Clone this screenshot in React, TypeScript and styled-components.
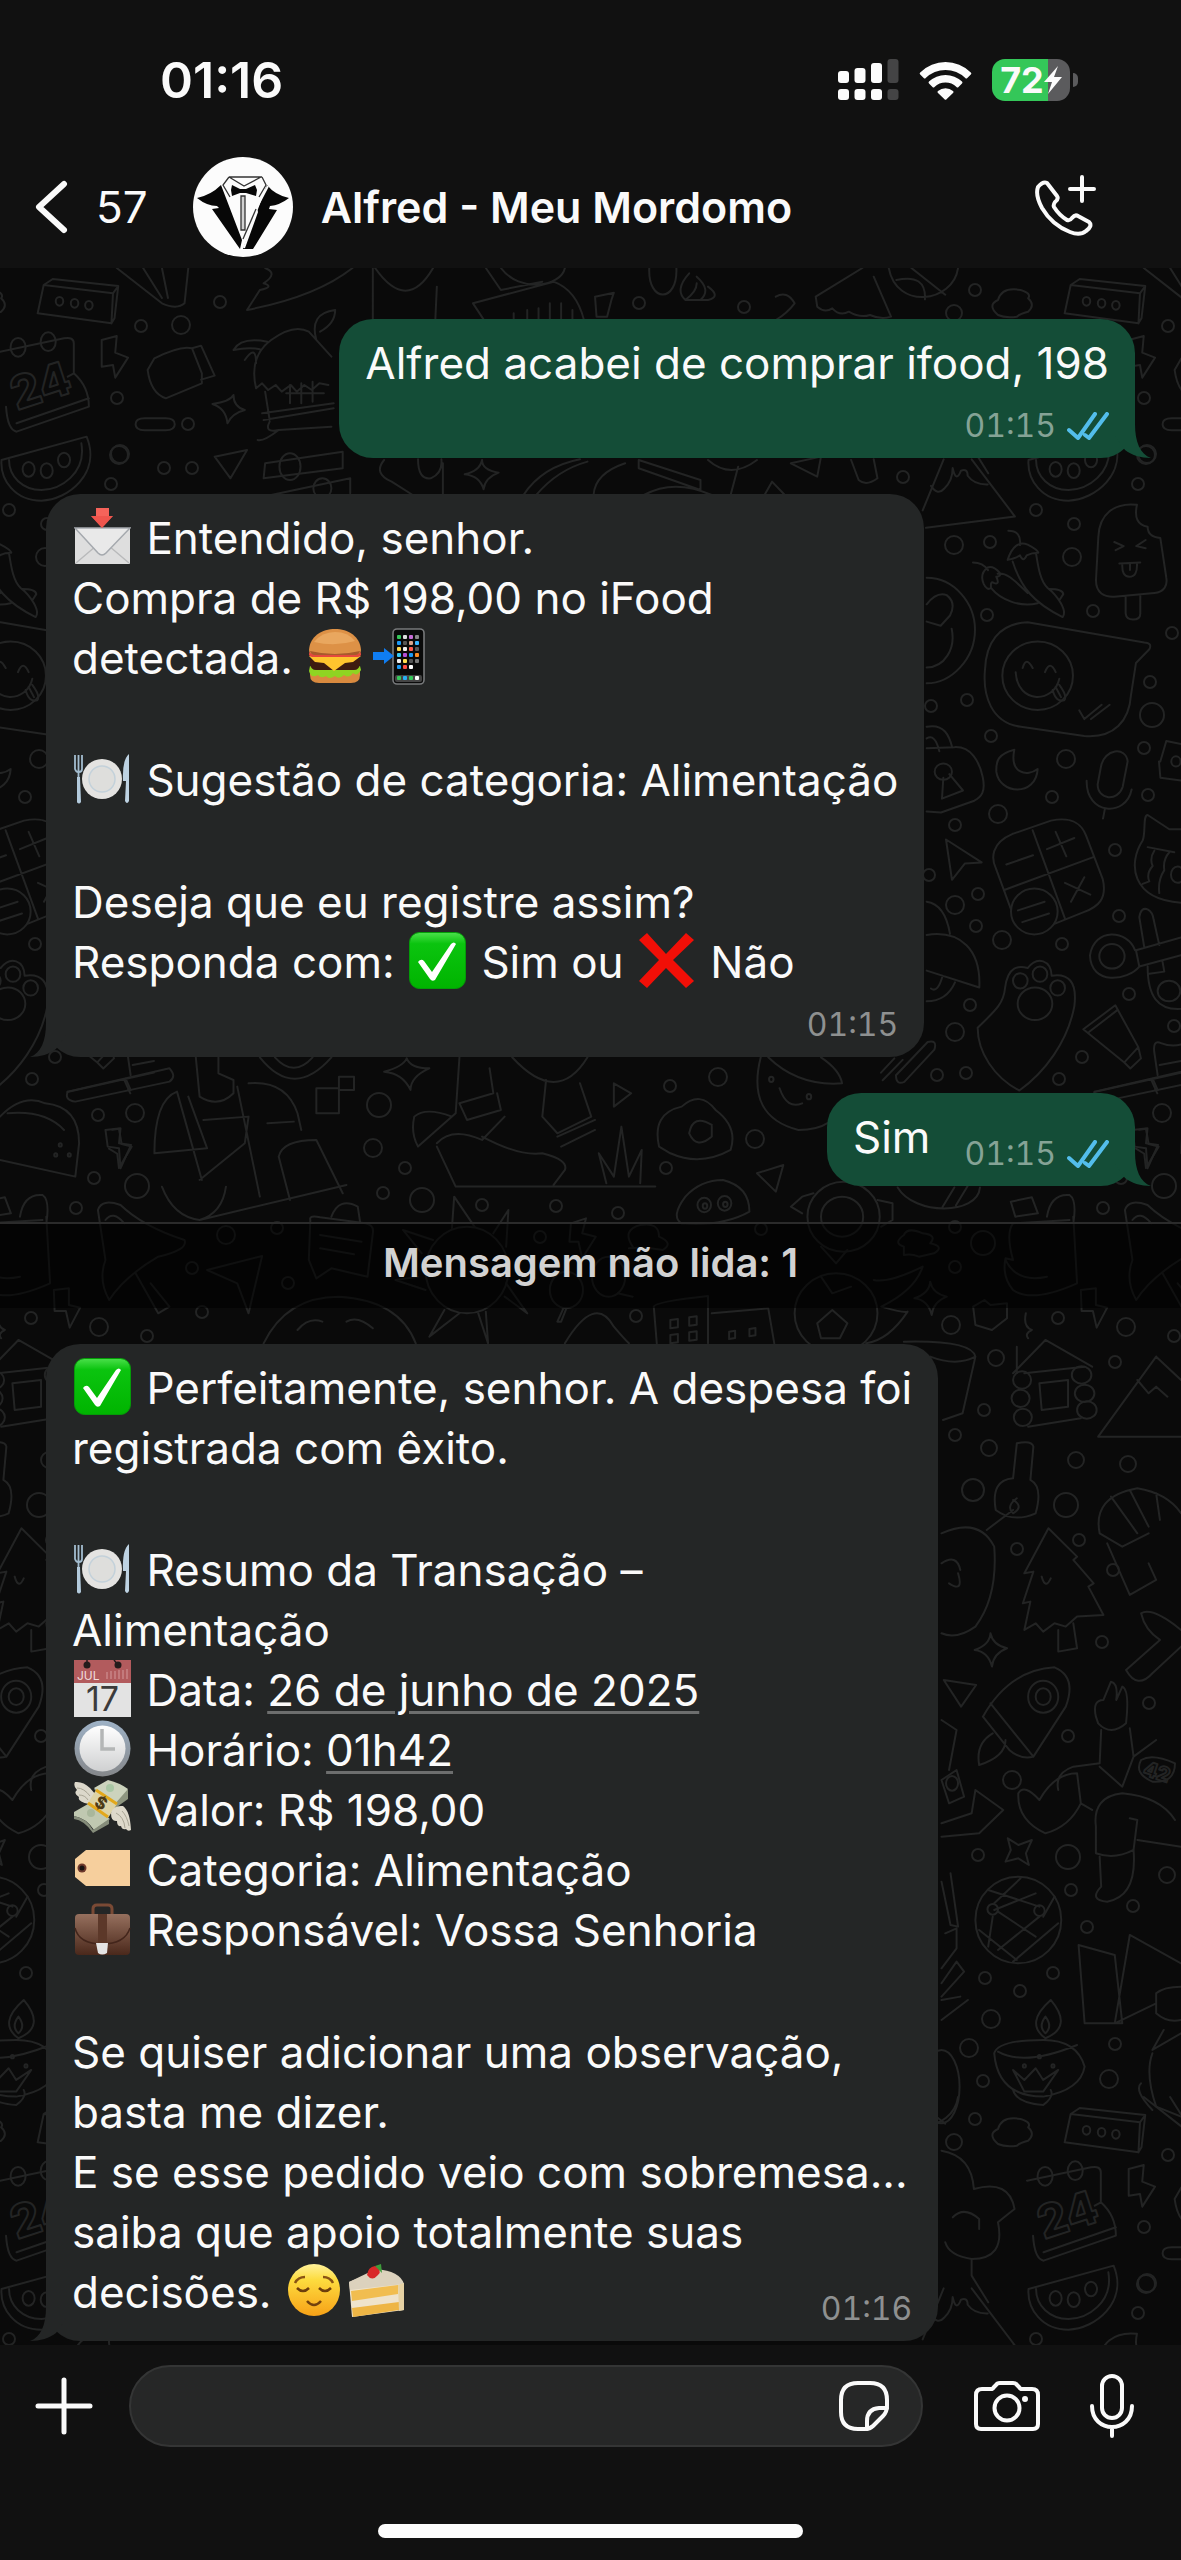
import React from "react";
import styled, { createGlobalStyle } from "styled-components";

const GlobalStyle = createGlobalStyle`
  *, *::before, *::after { box-sizing: border-box; }
  body { margin: 0; background: #111111; }
`;

/* ---------- page shell ---------- */

const Screen = styled.div`
  display: flex;
  flex-direction: column;
  min-height: 100vh;
  background: #111111;
  color: #fafafa;
  font-family: Inter, "Liberation Sans", sans-serif;
`;

const StatusBar = styled.div`
  display: flex;
  align-items: center;
  justify-content: space-between;
  height: 148px;
  padding: 12px 103px 0 160px;
`;

const Clock = styled.time`
  font-size: 50px;
  line-height: 60px;
  font-weight: 600;
`;

const StatusIcons = styled.div`
  display: flex;
  align-items: center;
  gap: 20px;
`;

const Battery = styled.div`
  display: flex;
  align-items: center;
  gap: 3px;
`;

const BatteryBody = styled.div<{ $level: number }>`
  display: flex;
  align-items: center;
  justify-content: center;
  width: 78px;
  height: 42px;
  border-radius: 13px;
  background: linear-gradient(
    to right,
    #34c759 ${(p) => p.$level}%,
    #5b5b5d ${(p) => p.$level}%
  );
  font-size: 36px;
  line-height: 42px;
  font-weight: 700;
`;

const BatteryCap = styled.div`
  width: 5px;
  height: 14px;
  border-radius: 0 5px 5px 0;
  background: #5b5b5d;
`;

const Header = styled.header`
  display: flex;
  align-items: center;
  height: 120px;
  padding: 0 85px 2px 34px;
`;

const IconButton = styled.button`
  display: flex;
  align-items: center;
  justify-content: center;
  flex: none;
  padding: 0;
  border: 0;
  background: none;
  color: inherit;
  font: inherit;
  cursor: pointer;
`;

const BackButton = styled(IconButton)`
  gap: 28px;
  margin-right: 45px;
  font-size: 44px;
  line-height: 60px;
`;

const ContactTitle = styled.h1`
  flex: 1;
  margin: 0 0 0 28px;
  font-size: 43px;
  line-height: 60px;
  font-weight: 600;
`;

/* ---------- conversation ---------- */

const Chat = styled.main`
  position: relative;
  flex: 1;
  display: flex;
  flex-direction: column;
  gap: 36px;
  padding: 51px 0 4px;
  overflow: hidden;
  background: #0a0a0a;
`;

const WallpaperSvg = styled.svg`
  position: absolute;
  inset: 0;
  width: 100%;
  height: 100%;
  fill: none;
  stroke: #232424;
  stroke-width: 2;
  stroke-linecap: round;
  stroke-linejoin: round;
  path, ellipse, rect { vector-effect: non-scaling-stroke; }
`;

const Bubble = styled.article<{ $mine?: boolean; $inline?: boolean }>`
  position: relative;
  display: flex;
  flex-direction: ${(p) => (p.$inline ? "row" : "column")};
  align-items: flex-end;
  justify-content: space-between;
  gap: ${(p) => (p.$inline ? "0 34px" : "13px")};
  align-self: ${(p) => (p.$mine ? "flex-end" : "flex-start")};
  max-width: calc(100% - 92px);
  margin: 0 46px;
  padding: 14px 26px 12px;
  border-radius: 34px;
  background: ${(p) => (p.$mine ? "#144d37" : "#242626")};
`;

const TailSvg = styled.svg<{ $mine?: boolean }>`
  position: absolute;
  bottom: 0;
  ${(p) => (p.$mine ? "right: -16px;" : "left: -16px; transform: scaleX(-1);")}
  width: 46px;
  height: 34px;
  fill: ${(p) => (p.$mine ? "#144d37" : "#242626")};
`;

const Body = styled.div<{ $inline?: boolean }>`
  align-self: ${(p) => (p.$inline ? "flex-end" : "stretch")};
  margin-bottom: ${(p) => (p.$inline ? "7px" : "0")};
  font-size: 44px;
  line-height: 60px;
`;

const Paragraph = styled.p`
  margin: 0;
  & + & { margin-top: 62px; }
`;

const DataLink = styled.a`
  color: inherit;
  text-decoration: underline;
  text-decoration-color: #6d6e6e;
  text-decoration-thickness: 3px;
  text-underline-offset: 5px;
`;

const Meta = styled.footer<{ $mine?: boolean }>`
  display: flex;
  align-items: center;
  gap: 11px;
  color: ${(p) => (p.$mine ? "#85a396" : "#8e9090")};
  font-size: 32px;
  line-height: 40px;
  font-variant-numeric: tabular-nums;
  white-space: nowrap;
`;

const OverlaidMeta = styled(Meta)`
  position: absolute;
  right: 26px;
  bottom: 12px;
`;

const EmojiSvg = styled.svg`
  width: 57px;
  height: 57px;
  margin: 0 3px 0 2px;
  vertical-align: -11px;
`;

const Unread = styled.div`
  position: relative;
  display: flex;
  align-items: center;
  justify-content: center;
  height: 86px;
  padding-bottom: 6px;
  border-top: 2px solid #2b2b2b;
  background: rgba(0, 0, 0, 0.55);
  color: #d2d2d2;
  font-size: 40px;
  line-height: 50px;
  font-weight: 600;
`;

/* ---------- composer ---------- */

const Composer = styled.form`
  display: flex;
  align-items: center;
  padding: 20px 47px 0 35px;
`;

const Field = styled.label`
  display: flex;
  align-items: center;
  flex: 1;
  min-width: 0;
  height: 82px;
  margin: 0 51px 0 36px;
  padding: 0 32px;
  border: 2px solid #343535;
  border-radius: 41px;
  background: #262727;
`;

const TextInput = styled.input`
  flex: 1;
  min-width: 0;
  border: 0;
  outline: 0;
  background: none;
  color: inherit;
  font: inherit;
  font-size: 44px;
`;

const Tools = styled.div`
  display: flex;
  align-items: center;
  gap: 50px;
`;

const HomeArea = styled.div`
  display: flex;
  justify-content: center;
  padding: 77px 0 22px;
`;

const HomeIndicator = styled.div`
  width: 36%;
  height: 14px;
  border-radius: 7px;
  background: #fcfcfc;
`;

/* ---------- wallpaper ---------- */

const TILE_W = 1027;
const TILE_H = 1829;
const WIDE = "0.7532 0 0 0.3333";

/* x, y, radius */
const dots: number[][] = [
  [903,477,6],[1036,510,6],[1074,524,6],[1138,484,6],[1147,454,9],[954,545,9],[990,542,6],[1072,557,9],
  [1093,611,6],[1172,633,6],[987,615,6],[1150,682,6],[1152,715,12],[967,700,6],[931,706,6],[991,736,6],
  [1066,759,9],[1144,748,6],[1052,797,6],[1148,795,6],[998,814,9],[955,825,6],[1115,850,6],[978,894,6],
  [955,905,9],[976,926,6],[1002,940,9],[1062,944,6],[1119,916,6],[1129,994,6],[970,1005,6],[955,1032,9],
  [1082,1057,6],[1059,1079,6],[937,1075,6],[966,1073,6],[1174,1026,6],[1162,1113,9],[1164,1186,12],
  [1103,1208,6],[929,875,6],[141,326,6],[181,325,9],[117,398,6],[188,424,6],[119,455,9],[164,468,6],
  [192,468,6],[220,302,6],[639,303,6],[744,307,6],[954,313,8],[975,290,6],[98,1115,6],[94,1178,6],
  [379,1105,12],[373,1148,9],[405,1168,6],[383,1193,6],[670,1086,6],[718,1077,9],[755,1139,9],[666,1168,6],
  [422,1200,12],[482,1205,6],[556,1206,6],[618,1213,6],[226,1235,9],[277,1228,6],[192,1268,6],[288,1283,6],
  [202,1312,6],[147,1336,6],[540,1237,6],[761,1229,6],[636,1316,6],[983,1243,12],[955,1227,6],[955,1267,6],
  [951,1325,9],[1058,1318,6],[1126,1327,9],[996,1358,8],[1115,1362,6],[984,1410,6],[955,1435,6],[989,1448,8],
  [1076,1460,8],[1128,1464,8],[973,1490,11],[1066,1505,12],[1079,1540,6],[1017,1549,6],[1113,1570,6],
  [1102,1642,6],[1149,1703,6],[1068,1736,6],[1012,1780,9],[978,1855,6],[1068,1857,12],[1071,1890,6],
  [1087,1927,6],[1133,1906,6],[1053,1973,6],[985,1978,6],[1020,1991,6],[991,2019,9],[969,2048,9],
  [983,2081,6],[1115,2044,6],[1109,2079,9],[1167,1875,8],
];

/* each sheet: its matrix, line work, and ovals as x, y, rx, ry */
const sheets: { m: string; d: string; e: number[][] }[] = [
  {
    m: "0.3333 0 0 0.5102 881 440",
    d: `M188,38L125,138M135,172L402,150L272,38M150,90q20,20 40,5q25,-15 25,-40q10,30 25,5q20,-5 20,10q20,18 60,17
M382,178q40,0 35,28M380,235q20,-40 60,-30q30,10 32,16q-20,0 -35,5q-10,15 -20,0q-10,5 -37,9M395,238C420,290 460,320 545,347C560,335 530,305 500,290C475,275 470,240 465,222M276,240q30,0 45,15M350,262C380,260 400,275 440,300M330,290C360,315 420,328 470,320M320,250q-25,12 -12,32q10,14 22,8q-2,-15 8,-10q20,5 8,-12q15,0 10,-8q-20,-14 -36,-10M505,292q40,0 42,10l-12,12
M768,127C700,122 655,145 652,190L645,275C645,300 670,308 700,307L820,300C850,298 860,285 856,270L838,192Q800,190 800,170Q755,165 768,127ZM734,308V340Q736,352 756,352Q778,352 778,340V306M700,200l28,8l-24,8M794,196l-28,12l28,4M715,242L778,240M724,243Q722,268 745,268Q770,268 768,242M747,243v12
M137,270C220,270 282,320 282,372C282,430 210,477 137,477M137,322q30,-25 60,-18q30,15 10,40l-28,20l-42,-8M212,370C225,410 190,445 137,446
M440,357C350,360 315,400 312,450C305,500 330,555 420,562L610,580C700,585 745,550 750,500L765,437L805,410Q815,398 790,397ZM404,455C410,520 520,515 535,468M425,447q10,-25 30,0M492,455q15,-25 32,0M515,490q10,25 35,20q10,-8 -15,-30M524,484l16,20M595,530l15,17l52,-28M630,547l56,-28
M137,604L220,602C270,600 295,630 305,660C315,690 300,700 280,707L180,730L137,728M137,562C190,555 205,580 214,603M137,585q25,-10 38,25M187,662L183,703L246,687L205,655
M400,607C350,615 345,630 346,650C355,695 465,700 470,645C440,660 385,655 400,607Z
M660,640C670,605 735,600 740,630L725,680C710,710 650,705 650,675ZM617,668C615,735 735,740 752,685M672,722l-6,20
M900,763L865,763L800,735C785,735 795,770 785,785C740,830 750,900 900,907M800,798L880,808M820,805q-15,15 -5,30q-20,15 -10,30l-20,5M865,808q-20,15 -15,35q-20,20 -15,45M838,630l18,-40l60,8M838,660l-4,-30M838,662l70,6
M195,783L302,828L252,830L213,862Z
M395,772L510,746C570,738 600,750 615,775L665,860C680,900 650,915 610,925L522,948M395,772C330,790 330,820 345,840L390,920M455,765L552,938M370,882L635,818M411,922l80,-17M424,945l80,-17M376,832l80,-18M498,802l82,-22M524,768l32,48M552,868l76,23M610,857l-40,48
M137,970C240,960 300,1000 295,1073L137,1040M137,905q55,5 70,63M137,1100q60,0 85,-37M150,1075q20,10 35,-25
M290,1152C340,1120 368,1105 372,1075C380,1030 415,1030 440,1035C470,1010 510,1020 512,1050C560,1045 590,1060 580,1110C560,1180 490,1240 415,1275C340,1250 290,1200 290,1152Z
M765,1000L900,975M775,1032L900,1010M765,1000L775,1032C740,1060 630,1070 627,1010C640,955 740,960 762,1000M800,1032C800,1090 830,1118 900,1115M805,1046l45,-4l-6,-22M790,995L775,935Q780,915 800,920Q815,925 818,940L835,990
M607,1155L703,1108L772,1190L730,1220ZM625,1160L708,1118M772,1190l8,22l-32,20l-18,-12
M830,1245L820,1200Q815,1175 840,1182Q870,1190 900,1185M640,1278L900,1240M815,1252l15,22M836,1225l64,-8
M45,1245L140,1180Q170,1175 160,1195L70,1258Q45,1265 45,1245M0,1240l40,-28M5,1255l60,-40
M775,1352l20,-2l8,30l30,5l-38,42l-5,-28l-25,-10
M50,1465C100,1520 290,1520 297,1465M185,1503l35,-38M225,1500l35,-38`,
    e: [[470,462,106,67],[187,650,26,16],[460,924,70,45],[418,1060,22,15],[477,1047,22,15],[530,1074,22,15],
      [462,1105,52,32],[693,1012,38,24],[864,1080,34,20],[885,630,14,10],[890,852,20,16]],
  },
  {
    m: `${WIDE} 0 260`,
    d: `M58,75L150,100L148,190L50,160ZM58,75L70,57L157,78L150,100M157,78L152,175L148,190
M155,24L215,130Q235,150 245,130L250,24M190,24l25,90M215,24l8,90M352,24Q370,40 350,70Q365,80 345,90L328,150Q420,110 468,24
M498,24Q540,160 575,24M495,24L495,180M580,80L578,178M645,24L665,90L720,65M665,24C690,100 745,80 750,24
M628,130L735,65Q765,90 775,178M628,130L642,178M682,160V180M700,150v30M715,145v35M730,130v50M745,130v50M760,150v30
M790,110l25,-12l-3,20l-6,52l-14,0ZM862,24C860,130 900,130 898,24M915,40q-20,50 -5,80q15,-25 15,-50M925,50q20,40 5,70M940,80q18,30 0,40l-30,0
M1145,24L1083,110L1085,140q10,20 20,5q10,25 22,10q15,20 28,10q15,15 28,5L1160,50
M1180,24C1190,150 1265,130 1272,24M1190,60Q1230,40 1228,118M1210,24l45,80M1030,110q15,-20 25,20q-10,30 -25,50
M1325,165q-15,-30 0,-45q5,-40 30,-30q15,10 10,25q10,20 0,40q-10,5 -15,15q-15,5 -25,-5
M0,275L85,235Q98,230 98,250V340Q118,380 118,440L22,515Q10,510 8,440M22,490L118,415M98,340L90,350
M135,240l20,-12l-2,50l17,15l-17,60l-3,-38l-15,5Z
M205,295Q240,255 255,265L268,340L268,370L220,415Q200,400 196,330ZM255,265l12,-8l18,90l-18,12
M340,385Q330,290 360,240Q390,190 410,215L440,290M340,385l8,-15l8,20l10,-15l8,20l12,-20l8,20l10,-20l10,15l10,-20l12,5M310,270Q320,230 355,245M340,310Q340,250 325,300M310,270Q330,260 345,268M420,240Q410,160 445,150Q445,190 425,215M352,395L358,480M348,460L443,430M350,480L443,445M385,375V430M400,370v60M415,365v60M380,400h50M358,485Q350,520 370,510Q350,545 342,540M370,510L440,500
M310,405Q310,440 325,450Q308,460 302,490Q300,445 282,432Q305,425 310,405Z
M192,475h28q12,0 12,18t-12,18h-28q-12,0 -12,-18t12,-18Z
M2,600L115,530C135,640 90,720 55,722C20,722 0,660 2,600ZM108,550C115,640 80,690 55,690C30,690 12,650 12,600
M285,590L328,570L306,655ZM352,610L455,575V625L350,655ZM360,705L465,655V700
M510,600Q495,640 520,665L548,705M555,598Q555,660 572,655Q588,640 586,598M588,610V705
M640,600q0,30 22,38q-18,15 -20,50q-5,-40 -25,-45q20,-10 23,-43
M695,705Q720,620 770,598M712,705Q740,630 780,605M788,705Q790,640 830,610M848,600L930,660V690L848,625ZM855,705Q895,655 945,705
M940,600Q970,660 1005,600M980,620L970,705M1015,705L1025,665L1042,705M1050,610L1090,590L1085,650ZM1130,600L1140,660Q1150,680 1165,655L1160,598
M1250,185Q1290,200 1293,300Q1340,270 1347,360Q1330,390 1325,400Q1335,510 1290,510Q1260,500 1255,460M1265,385Q1280,350 1300,390V420M1290,510V560L1312,640`,
    e: [[79,124,5,13],[99,130,5,13],[118,136,5,13],[24,262,10,28],[64,245,10,28],[38,628,8,22],[62,632,8,22],
      [85,600,8,22],[385,620,14,40],[428,685,12,30]],
  },
  {
    m: `${WIDE} 0 700`,
    d: `M90,1175L225,1105Q235,1130 225,1145L100,1205Q85,1200 90,1175M165,1140l8,40
M260,1072L265,1190Q290,1225 310,1180V1140L290,1120V1072M345,1072Q390,1200 440,1072M365,1072Q390,1135 415,1072
M205,1360Q205,1200 235,1175L268,1440M205,1360L275,1345L250,1190M270,1260L330,1250L325,1330L265,1440M330,1150Q380,1140 395,1240L400,1290M315,1160L345,1490M355,1270L390,1265M370,1370Q375,1320 420,1320L455,1480M370,1370L385,1500
M420,1165h30v75h-30zM450,1130h20v40h-20z
M540,1075q5,30 30,30q-25,25 -25,65q-10,-50 -35,-55q25,-15 30,-40
M610,1072L605,1240L555,1340Q545,1300 550,1250Q565,1220 600,1250M650,1105L655,1180L610,1210L620,1260L665,1230L660,1180M680,1072Q740,1220 780,1072M725,1140L720,1250L740,1300L785,1250L770,1150M580,1330Q600,1280 640,1320L670,1250M580,1340L605,1460H870M640,1310Q690,1370 720,1360Q755,1380 750,1410L735,1455M740,1310L790,1260M745,1340L790,1290M805,1450L795,1360L815,1430L825,1280L835,1430L852,1350L850,1450
M815,1150L838,1180L815,1220Z
M875,1340Q865,1240 905,1220Q930,1170 950,1230Q980,1280 970,1350Q930,1400 890,1360ZM945,1275Q920,1240 915,1300Q925,1350 945,1310l0,-30
M1010,1072Q990,1250 1060,1290Q1110,1290 1120,1200M1020,1072Q1060,1160 1118,1150Q1115,1110 1090,1072M1035,1165Q1045,1230 1065,1210
M0,1250Q30,1180 60,1210Q105,1220 105,1330L100,1430L0,1380M10,1240Q60,1230 85,1290
M140,1290l20,-5l-2,45l16,5l-14,70l-2,-60l-15,-5zM1005,1420L1040,1395L1030,1475Z`,
    e: [[80,1335,2,5],[92,1365,2,5],[74,1365,2,5],[1024,1138,3,8],[1074,1190,3,8]],
  },
  {
    m: `${WIDE} 0 1180`,
    d: `M215,20Q230,110 265,120Q295,100 300,20M265,120L460,15
M1345,130Q1335,160 1345,240L1335,235Q1330,290 1345,330Q1370,370 1430,310L1425,110M1345,130L1420,120M1342,65L1370,52L1378,100L1348,110ZM1390,110Q1395,40 1420,45Q1430,60 1425,130M1335,240Q1350,310 1390,290
M130,90Q135,55 160,75Q190,140 245,180Q250,210 210,230Q165,290 145,360Q130,300 140,240ZM140,120Q150,90 165,130M180,280L210,400L225,380L200,310
M275,270L348,228L330,400L315,310Z
M412,120Q410,105 425,112L485,130Q497,135 495,160L488,290L440,265L420,295L410,240ZM425,165l55,20M425,205l45,18M440,110Q450,50 475,80L478,125
M575,180L535,150L560,220M600,145L603,50L630,140M655,160L675,90L672,200M555,290L525,300L565,330M590,390L570,470L610,400M635,400L648,490L645,395M670,350L700,400L672,310
M350,490Q380,350 450,350Q530,360 552,490M395,450Q410,410 428,425M460,425Q475,405 495,445
M758,130l20,-15l-5,45l18,10l-18,65l-5,-50l-12,0z
M840,200Q825,150 850,135Q875,125 875,170Q895,190 880,210Q855,200 835,205M748,385L740,425L745,425L752,385M820,340l20,10
M905,130Q890,110 910,50Q930,0 960,0Q995,20 995,95Q960,140 905,130
M1080,40l-15,10l-15,30l15,20M1165,60l20,10l0,50l-15,20M1090,200l20,50l15,-40
M872,490L868,380Q870,365 940,348V490M945,400L1020,385L1028,490M890,420l10,-3v25l-10,3zM915,412l10,-3v25l-10,3zM890,465l10,-3v25l-10,3zM915,457l10,-3v25l-10,3zM968,455l8,-3v22l-8,3zM995,447l8,-3v22l-8,3z
M1085,430L1105,390L1125,430L1115,475L1090,475ZM1090,290l15,50l25,-20M1160,300Q1180,310 1225,260Q1215,330 1170,380Q1200,400 1205,395Q1180,480 1150,490
M750,490Q790,340 815,440Q830,480 835,490
M1235,305q3,35 22,45q-18,15 -20,55q-5,-45 -23,-50q20,-15 21,-50
M1200,200q-15,-10 0,-35q5,-25 25,-5q20,5 10,30q20,10 5,30q-10,5 -20,10q-10,-10 -20,-5z
M1292,380l15,-20l8,15l22,-5v45l-20,35l-22,-15zM1362,400Q1358,440 1370,450Q1360,460 1365,475
M1345,580L1388,480L1450,560M1350,500V580M1380,610L1418,600V680L1383,690ZM1365,740L1435,715M1360,580L1440,560
M1435,330l20,-5l0,50l15,8l-14,60l-5,-50l-15,0z
M1200,485Q1290,480 1295,530Q1270,560 1235,530M1295,530L1278,700L1252,720
M1535,530L1458,770H1568M1535,530L1568,600M1510,600l15,40l10,-20l15,30
M1350,790Q1370,780 1372,800L1368,900Q1385,920 1375,1000Q1345,1030 1322,990Q1315,900 1345,895ZM1345,960q15,20 0,40q-10,-20 5,-45M1310,1050L1345,990
M1460,1060Q1450,950 1510,925Q1550,940 1568,1000M1475,950L1510,1060M1500,930L1525,1040M1460,1060L1490,1100L1525,1060M1470,1090L1500,1245L1535,1200L1525,1150M1535,940l5,80
M1250,1060Q1300,1010 1320,1100Q1325,1250 1295,1340Q1270,1380 1250,1360M1250,1150q20,-30 25,20M1260,1210q20,30 12,-30
M1392,1045L1360,1180L1372,1175L1358,1270L1368,1265L1360,1350L1375,1330L1385,1355L1400,1330L1415,1340L1430,1310L1465,1305L1445,1220L1452,1210L1425,1140L1430,1130ZM1405,1350V1415L1430,1405L1425,1330M1383,1190q5,40 12,5
M1315,1360q3,35 22,45q-18,15 -20,55q-5,-45 -23,-50q20,-15 21,-50
M1568,1350Q1530,1280 1515,1300Q1520,1350 1540,1380L1495,1470Q1510,1530 1530,1480L1568,1400`,
    e: [[620,270,55,130],[752,330,22,55],[808,290,22,60],[935,75,9,22],[962,70,9,22],[936,78,3,8],[963,73,3,8],
      [1120,110,48,105],[1118,110,28,60],[1110,400,55,120],[1357,600,12,26],[1436,585,13,26],[1355,655,12,26],
      [1440,640,13,26],[1358,712,12,26],[1443,690,13,26]],
  },
  {
    m: `${WIDE} 0 1640`,
    d: `M1253,120L1296,135L1276,200Z
M1305,230Q1340,90 1400,82Q1430,110 1415,200L1372,350Q1355,360 1340,330L1305,230M1315,190L1372,350M1318,280Q1295,310 1300,375Q1335,350 1335,300
M1455,230Q1450,180 1465,180L1475,125Q1485,130 1482,180L1490,140Q1500,150 1495,250Q1475,290 1458,250ZM1462,270L1460,370L1425,380Q1400,400 1405,450M1500,265L1505,350L1490,440L1460,380M1515,360Q1530,340 1560,370Q1560,430 1530,425Q1505,400 1515,360M1505,350L1535,300
M1352,460Q1360,430 1380,480Q1400,400 1430,400L1435,490Q1420,560 1388,580Q1350,540 1352,460M1435,490L1450,510
M1455,560Q1450,470 1490,460Q1540,470 1560,540M1455,560L1455,640Q1480,660 1505,630L1510,540L1500,535M1460,650L1462,740Q1445,780 1470,785Q1510,770 1505,630M1510,600l58,20
M1250,550L1290,520L1295,450L1332,510L1300,580L1250,590M1338,595L1352,615L1370,600L1362,640L1366,675L1352,655L1335,665L1342,630Z
M1320,790L1355,715M1312,750L1380,800M1320,810L1375,760M1325,815L1375,890M1318,830L1312,920M1385,830L1400,770M1380,830L1325,930M1345,965L1405,850M1300,870L1350,960
M1250,725l12,130l10,5l-10,-160M1255,880l15,-15l0,60l-20,60M1250,1030l20,-65l10,30l-30,75M1250,1080l25,-10M1250,1140l35,-60
M1432,915L1480,945L1490,1150L1440,1150ZM1500,885L1568,970M1500,885L1480,1150L1535,1090M1535,1060Q1545,1040 1568,1040M1535,1060L1535,1120Q1550,1150 1568,1140
M1250,420l20,-30l10,80l-20,20zM1250,240l20,30l-10,120
M1385,1200Q1325,1200 1320,1240Q1325,1370 1385,1370Q1435,1350 1440,1280Q1430,1200 1385,1200M1325,1235Q1360,1280 1430,1215M1388,1195Q1360,1150 1395,1080Q1425,1160 1388,1195M1388,1180q-10,-20 0,-50q10,30 0,50M1345,1350Q1350,1390 1385,1395Q1400,1370 1395,1350M1345,1290L1360,1355L1385,1355L1405,1290L1385,1320L1375,1285L1360,1320Z
M1530,1240Q1520,1300 1535,1400L1568,1430M1515,1330q-10,20 15,80M1545,1170l-15,60l38,-50`,
    e: [[1385,170,20,48],[1385,170,10,25],[1264,430,8,22],[1352,840,57,130],[1318,808,7,16],[1380,812,7,16],
      [1380,1250,2,5],[1360,1278,2,5],[1398,1278,2,5],[1250,1340,24,110]],
  },
];

const tiles = [-TILE_W, 0, TILE_W].flatMap((x) => [0, TILE_H].map((y) => ({ x, y })));

const DoodleText = styled.text`
  font-family: Inter, sans-serif;
  font-weight: 800;
`;

const Wallpaper = () => (
  <WallpaperSvg aria-hidden="true">
    <defs>
      <g id="doodles">
        {sheets.map((s) => (
          <g key={s.m} transform={`matrix(${s.m})`}>
            <path d={s.d} />
            {s.e.map(([x, y, rx, ry], i) => (
              <ellipse key={i} cx={x} cy={y} rx={rx} ry={ry} />
            ))}
          </g>
        ))}
        {dots.map(([x, y, r], i) => (
          <ellipse key={i} cx={x} cy={y} rx={r} ry={r} />
        ))}
        <DoodleText x="10" y="402" fontSize="46" transform="rotate(-18 40 385)">24</DoodleText>
        <DoodleText x="1144" y="1779" fontSize="20" transform="rotate(18 1157 1771)">42</DoodleText>
      </g>
    </defs>
    <g transform="translate(0 -268)">
      {tiles.map((t) => (
        <use key={`${t.x}:${t.y}`} href="#doodles" x={t.x} y={t.y} />
      ))}
    </g>
  </WallpaperSvg>
);

/* ---------- emoji ---------- */

const Emoji = ({ label, children }: { label: string; children: React.ReactNode }) => (
  <EmojiSvg viewBox="0 0 57 57" role="img" aria-label={label}>
    {children}
  </EmojiSvg>
);

const Envelope = () => (
  <Emoji label="envelope">
    <rect x="1" y="20" width="55" height="36" rx="1" fill="#dedede" />
    <path d="M2 55 22 38M55 55 35 38" stroke="#b9babb" strokeWidth="1.4" />
    <path d="M1 20h55L32 45q-4 4-8 0Z" fill="#e9e9e9" stroke="#a5a9ae" strokeWidth="1.5" />
    <path d="M22 0h13v8h4L28 20 17 8h5Z" fill="#f5635a" />
    <path d="M17 8h22L28 20Z" fill="#e9473f" opacity=".5" />
  </Emoji>
);

const Burger = () => (
  <Emoji label="hambúrguer">
    <path d="M3 42h50v5q0 8-9 8H12q-9 0-9-8Z" fill="#d98a3f" />
    <path d="M3 38q25 5 50 0l1 4q-4 7-8 3-4 6-9 2-5 5-9 1-6 4-9 0-5 3-8-1-7 4-9-4Z" fill="#8fd422" />
    <path d="M3 31h50v5q-1 6-6 6H9q-5 0-6-6Z" fill="#3e1c10" />
    <path d="M2 28h52l-8 6-8 1-11 8-10-8-9-1Z" fill="#ffc52e" />
    <path d="M3 23h50q3 5-2 6H5q-5-1-2-6Z" fill="#e4493d" />
    <path d="M2 22C3 8 15 1 28 1s25 7 26 21q0 4-5 4H7q-5 0-5-4Z" fill="#dd9146" />
    <path d="M7 14Q15 4 28 4t20 9q-20 6-41 1Z" fill="#eeb06a" opacity=".7" />
    <path d="M3 23q25 6 50 0-1 4-5 4H8q-4 0-5-4Z" fill="#a85a2b" />
  </Emoji>
);

const appColours = ["#35c759","#ddd","#c86dd7","#888","#1b9af7","#555","#d9a58c","#38b6ff","#ffd84d","#eee","#ff5b4d","#555","#38c9f5","#b44fd6","#1b9af7","#ff8b1f","#eee","#ffe04d","#555","#777","#1b9af7","#ff4e42","#fff"];

const PhoneArrow = () => (
  <Emoji label="celular com seta">
    <rect x="24" y="1" width="31" height="55" rx="4" fill="#0a0a0a" stroke="#77797b" strokeWidth="1.6" />
    {appColours.map((c, i) => (
      <rect key={i} x={28 + (i % 4) * 6} y={7 + Math.floor(i / 4) * 6} width="4" height="4" rx="1" fill={c} />
    ))}
    <rect x="26" y="47" width="27" height="7" rx="2" fill="#444" />
    {["#35c759", "#28aef5", "#35c759", "#fff"].map((c, i) => (
      <rect key={i} x={28 + i * 6} y="48" width="4" height="4" rx="1" fill={c} />
    ))}
    <path d="M4 24h11v-4l10 8-10 8v-4H4Z" fill="#0f7df2" />
  </Emoji>
);

const Plate = () => (
  <Emoji label="prato com talheres">
    <circle cx="28" cy="29" r="20" fill="#e4e3e1" />
    <circle cx="28" cy="29" r="13" fill="#dededc" stroke="#c3d1da" strokeWidth="1.5" />
    <path d="M1 5v14q1 3 3 3h1q3 0 3-3V5M4.500 5v48" fill="none" stroke="#a3bdd0" strokeWidth="1.800" />
    <path d="M3 27h3l1 25q-2 3-4 0Z" fill="#b3cadc" />
    <path d="M55 4q-7 6-6 27h3l-1 20q2 4 4 0Z" fill="#bdd2e2" />
  </Emoji>
);

const Check = () => (
  <Emoji label="sim">
    <linearGradient id="checkFill" x2="0" y2="1">
      <stop offset="0" stopColor="#4be04b" />
      <stop offset=".2" stopColor="#0bc40f" />
      <stop offset="1" stopColor="#00b400" />
    </linearGradient>
    <rect x=".5" y=".5" width="56" height="56" rx="10" fill="url(#checkFill)" stroke="#049c08" />
    <path d="M9 30q3-4 6-1l8 11L42 12q3-3 5 0L26 48q-3 2-5-1Z" fill="#fff" />
  </Emoji>
);

const Cross = () => (
  <Emoji label="não">
    <path d="M1 8 9 1l19 21L48 1l8 7-21 20 21 21-8 7-20-20L9 56l-8-7 20-21Z" fill="#f10f07" />
  </Emoji>
);

const CalendarEmoji = () => (
  <Emoji label="calendário">
    <rect width="57" height="57" fill="#e3e3e3" />
    <rect width="57" height="23" fill="#b25b5d" />
    <circle cx="13" cy="5" r="3.500" fill="#241b1b" />
    <circle cx="44" cy="5" r="3.500" fill="#241b1b" />
    <path d="M13 0v4M44 5 40 0" stroke="#241b1b" strokeWidth="1.500" />
    <path d="M33 12v7M37 11v8M41 11v8M45 10v9M49 10v9M53 9v10" stroke="#c98587" strokeWidth="1.500" />
    <text x="3" y="20" fontSize="12" fontFamily="Inter, sans-serif" fill="#f0dcdc">JUL</text>
    <text x="12" y="51" fontSize="34" fontFamily="Inter, sans-serif" fill="#3b3b3b">17</text>
  </Emoji>
);

const ClockEmoji = () => (
  <Emoji label="relógio">
    <linearGradient id="clockRim" x2="0" y2="1">
      <stop offset="0" stopColor="#9eb2c6" />
      <stop offset="1" stopColor="#85878a" />
    </linearGradient>
    <linearGradient id="clockFace" x2="0" y2="1">
      <stop offset="0" stopColor="#ffffff" />
      <stop offset="1" stopColor="#cfd0d1" />
    </linearGradient>
    <circle cx="28.500" cy="28.500" r="28" fill="url(#clockRim)" />
    <circle cx="28.500" cy="28.500" r="23" fill="url(#clockFace)" />
    <path d="M28 9v20h13" fill="none" stroke="#b4b6b6" strokeWidth="3.500" />
  </Emoji>
);

const Money = () => (
  <Emoji label="dinheiro com asas">
    <path d="M1 2q8-1 15 6l6 7-7 9Q3 22 5 17-1 13 3 10-1 6 1 2Z" fill="#dcd8cb" />
    <path d="M3 8q7 0 13 8M5 15q6 0 9 5" stroke="#a9a595" fill="none" />
    <path d="M20 9 34 1q12 3 20 9v9L40 29Z" fill="#8d957f" />
    <path d="M20 8 34 0q12 3 20 9L40 25Z" fill="#ccd3bd" />
    <path d="M0 32l14-8 22 15-16 11Q12 38 0 36Z" fill="#c0c8b1" />
    <path d="M0 36q12 2 19 14l16-11v5L19 53Q10 40 0 39Z" fill="#858c7a" />
    <path d="M22 10 43 24 34 38 14 23Z" fill="#ddd3a7" />
    <path d="m22 10 21 14M14 23l20 14" stroke="#e3a81b" strokeWidth="3" />
    <text x="21" y="29" fontSize="17" fontFamily="Inter, sans-serif" fontWeight="800" fill="#4e3b17" transform="rotate(30 27 24)">$</text>
    <path d="M37 33q2-8 12-7 7 5 8 24-3 2-5-1-4 1-5-3-4 1-4-5-6 1-6-8Z" fill="#ded9cb" />
    <path d="M42 33q8 4 9 15M48 31q5 5 7 15" stroke="#a9a595" fill="none" />
    <circle cx="36" cy="8" r="4" fill="#a9c7a4" /><circle cx="17" cy="33" r="4" fill="#a9b79c" />
  </Emoji>
);

const Label = () => (
  <Emoji label="etiqueta">
    <path d="M12 10h44v36H12L1 37V19Z" fill="#f6cf9d" />
    <circle cx="8" cy="28" r="4.500" fill="#6e392c" />
    <circle cx="8" cy="28" r="2.500" fill="#181312" />
  </Emoji>
);

const Briefcase = () => (
  <Emoji label="maleta">
    <linearGradient id="leather" x2="0" y2="1">
      <stop offset="0" stopColor="#96705e" />
      <stop offset="1" stopColor="#4a281b" />
    </linearGradient>
    <path d="M19 14V9q0-4 4-4h11q4 0 4 4v5" fill="none" stroke="#7a4a35" strokeWidth="3" />
    <rect x="1" y="14" width="55" height="41" rx="4" fill="url(#leather)" />
    <path d="M1 28q4 16 27 16t28-16" fill="none" stroke="#43251b" strokeWidth="1.500" />
    <path d="M24 14h9v29h-9Z" fill="#5c3829" />
    <path d="M22 43h12l-1 10q-5 3-9 0Z" fill="#e4e4e4" />
  </Emoji>
);

const Relieved = () => (
  <Emoji label="aliviado">
    <linearGradient id="faceFill" x2="0" y2="1">
      <stop offset="0" stopColor="#fff29a" />
      <stop offset=".3" stopColor="#fddc3f" />
      <stop offset="1" stopColor="#f7a117" />
    </linearGradient>
    <circle cx="28" cy="28" r="26" fill="url(#faceFill)" />
    <path d="M9 21q3-6 10-6M37 15q7 0 10 6" fill="none" stroke="#8a5413" strokeWidth="2.500" />
    <path d="M11 26q6 6 12 0M33 26q6 6 12 0" fill="none" stroke="#6d3e0c" strokeWidth="2.500" />
    <path d="M21 39q7 8 14 0" fill="none" stroke="#73420e" strokeWidth="2.500" />
  </Emoji>
);

const Cake = () => (
  <Emoji label="bolo">
    <path d="M1 20 30 8q20 4 26 14v26L4 55Z" fill="#efe3cc" />
    <path d="M1 20 28 7q24 2 28 15L2 28Z" fill="#dcd2bd" />
    <path d="m3 29 47-6v9L4 39Z" fill="#f1bd50" />
    <path d="m4 46 47-6v8L5 55Z" fill="#eeb545" />
    <path d="M50 23l6-2v27l-5 1Z" fill="#e6d2a4" />
    <path d="M19 13q1-8 8-9 8 4 3 9-6 7-11 0Z" fill="#d92828" />
    <path d="m27 4 6-2 1 9Z" fill="#3e9c3c" />
  </Emoji>
);

/* ---------- icons ---------- */

const line = {
  fill: "none",
  stroke: "currentColor",
  strokeLinecap: "round" as const,
  strokeLinejoin: "round" as const,
};

const SignalIcon = () => (
  <svg width="61" height="42" viewBox="0 0 61 42" aria-hidden="true" fill="#fcfcfc">
    <rect x="0" y="12" width="11" height="12" rx="3" /><rect x="0" y="30" width="11" height="11" rx="3" />
    <rect x="16.500" y="9" width="11" height="15" rx="3" /><rect x="16.500" y="30" width="11" height="11" rx="3" />
    <rect x="33" y="4" width="11" height="20" rx="3" /><rect x="33" y="30" width="11" height="11" rx="3" />
    <g fill="#444445"><rect x="49.500" y="0" width="11" height="24" rx="3" /><rect x="49.500" y="30" width="11" height="11" rx="3" /></g>
  </svg>
);

const WifiIcon = () => (
  <svg width="53" height="40" viewBox="0 0 53 40" aria-hidden="true" fill="#fcfcfc">
    <path d="M1.200 12.500a36 36 0 0 1 50.600 0q1 1 0 2l-3.500 3.600q-1 1-2 0a28 28 0 0 0-39.600 0q-1 1-2 0L1.200 14.500q-1-1 0-2Z" />
    <path d="M10 21.500a24 24 0 0 1 33 0q1 1 0 2l-3.500 3.500q-1 1-2 0a16 16 0 0 0-22 0q-1 1-2 0L10 23.500q-1-1 0-2Z" />
    <path d="M19 31a11.500 11.500 0 0 1 15 0q1 1 0 2l-6.500 6.300q-1 1-2 0L19 33q-1-1 0-2Z" />
  </svg>
);

const Tail = ({ mine }: { mine?: boolean }) => (
  <TailSvg $mine={mine} viewBox="0 0 46 34" aria-hidden="true">
    <path d="M30 0C30 18 35 30 46 34 36 34 26 31 20 26L10 12V0Z" />
  </TailSvg>
);

const Ticks = () => (
  <svg width="42" height="28" viewBox="0 0 42 28" {...line} stroke="#53bdeb" strokeWidth="4" role="img" aria-label="Lida">
    <path d="m2 18 9 8L28 2M18 23l4 3L40 2" />
  </svg>
);

const Avatar = () => (
  <svg width="100" height="100" viewBox="0 0 100 100" role="img" aria-label="Alfred">
    <circle cx="50" cy="50" r="50" fill="#fcfcfc" />
    <g fill="#070707">
      <path d="M28 28Q18 38 4 41q10 8 20 8l2 2-7 1 28 40 2-9Z" />
      <path d="M74 28q8 10 22 13-9 7-19 8l-1 3 8 1-24 39H50Z" />
      <path d="M39 28l8 4h6l9-4 2 5-1 6-10-3h-6l-8 3-1-6Z" />
    </g>
    <path d="M51 91 64 55l-1-3 12-23" fill="none" stroke="#fcfcfc" strokeWidth="2" />
    <g fill="none" stroke="#333" strokeWidth="1.300">
      <path d="M36 20h33M36 20l-6 8 7 12M69 20l4 8-7 12M36 20l15 9 17-9" />
      <path d="M48 39h4v34h-4Z" fill="#d0d0d0" />
      <path d="M50 82 63 52" />
    </g>
  </svg>
);

/* ---------- app ---------- */

export default function App() {
  return (
    <Screen>
      <GlobalStyle />
      <StatusBar>
        <Clock>01:16</Clock>
        <StatusIcons>
          <SignalIcon />
          <WifiIcon />
          <Battery>
            <BatteryBody $level={72}>
              72
              <svg width="18" height="28" viewBox="0 0 18 28" fill="#fcfcfc" aria-hidden="true">
                <path d="M14 0 0 16h8L4 28 18 11h-8Z" />
              </svg>
            </BatteryBody>
            <BatteryCap />
          </Battery>
        </StatusIcons>
      </StatusBar>

      <Header>
        <BackButton type="button" aria-label="Voltar, 57 conversas">
          <svg width="34" height="54" viewBox="0 0 34 54" {...line} strokeWidth="6">
            <path d="M30 4 5 27l25 23" />
          </svg>
          57
        </BackButton>
        <Avatar />
        <ContactTitle>Alfred - Meu Mordomo</ContactTitle>
        <IconButton type="button" aria-label="Ligar">
          <svg width="62" height="64" viewBox="0 0 62 64" {...line} strokeWidth="4">
            <path d="M48 2v24M36 14h24" />
            <path d="M4 12q5-6 9-4l10 13q2 3-2 6-2 3-1 5 5 8 13 13 3 1 5-2 3-4 6-2l11 6q4 4-3 9-6 5-16 1Q18 50 8 33 1 20 4 12Z" />
          </svg>
        </IconButton>
      </Header>

      <Chat>
        <Wallpaper />

        <Bubble $mine>
          <Tail mine />
          <Body><Paragraph>Alfred acabei de comprar ifood, 198</Paragraph></Body>
          <Meta $mine>01:15<Ticks /></Meta>
        </Bubble>

        <Bubble>
          <Tail />
          <Body>
            <Paragraph>
              <Envelope /> Entendido, senhor.<br />
              Compra de R$ 198,00 no iFood<br />
              detectada. <Burger /><PhoneArrow />
            </Paragraph>
            <Paragraph><Plate /> Sugestão de categoria: Alimentação</Paragraph>
            <Paragraph>
              Deseja que eu registre assim?<br />
              Responda com: <Check /> Sim ou <Cross /> Não
            </Paragraph>
          </Body>
          <Meta>01:15</Meta>
        </Bubble>

        <Bubble $mine $inline>
          <Tail mine />
          <Body $inline><Paragraph>Sim</Paragraph></Body>
          <Meta $mine>01:15<Ticks /></Meta>
        </Bubble>

        <Unread>Mensagem não lida: 1</Unread>

        <Bubble $inline>
          <Tail />
          <Body $inline>
            <Paragraph>
              <Check /> Perfeitamente, senhor. A despesa foi<br />
              registrada com êxito.
            </Paragraph>
            <Paragraph>
              <Plate /> Resumo da Transação –<br />
              Alimentação<br />
              <CalendarEmoji /> Data: <DataLink href="#data">26 de junho de 2025</DataLink><br />
              <ClockEmoji /> Horário: <DataLink href="#horario">01h42</DataLink><br />
              <Money /> Valor: R$ 198,00<br />
              <Label /> Categoria: Alimentação<br />
              <Briefcase /> Responsável: Vossa Senhoria
            </Paragraph>
            <Paragraph>
              Se quiser adicionar uma observação,<br />
              basta me dizer.<br />
              E se esse pedido veio com sobremesa...<br />
              saiba que apoio totalmente suas<br />
              decisões. <Relieved /><Cake />
            </Paragraph>
          </Body>
          <OverlaidMeta>01:16</OverlaidMeta>
        </Bubble>
      </Chat>

      <Composer onSubmit={(e) => e.preventDefault()}>
        <IconButton type="button" aria-label="Anexar">
          <svg width="58" height="58" viewBox="0 0 58 58" {...line} strokeWidth="5">
            <path d="M29 3v52M3 29h52" />
          </svg>
        </IconButton>
        <Field>
          <TextInput type="text" aria-label="Mensagem" />
          <IconButton type="button" aria-label="Figurinhas">
            <svg width="50" height="50" viewBox="0 0 50 50" {...line} strokeWidth="4">
              <path d="M2 19Q2 2 19 2h12q17 0 17 17v6q0 6-4 10L34 45q-3 3-8 3h-7Q2 48 2 31Z" />
              <path d="M48 27h-8q-12 1-12 13v8" />
            </svg>
          </IconButton>
        </Field>
        <Tools>
          <IconButton type="button" aria-label="Câmera">
            <svg width="66" height="50" viewBox="0 0 66 50" {...line} strokeWidth="4">
              <path d="M8 8h9q2 0 3-2l2-2q1-2 4-2h13q3 0 4 2l2 2q1 2 3 2h10q6 0 6 6v29q0 5-5 5H7q-5 0-5-5V14q0-6 6-6Z" />
              <circle cx="33" cy="27" r="12.500" />
              <circle cx="51" cy="18" r="1.500" strokeWidth="3" />
            </svg>
          </IconButton>
          <IconButton type="button" aria-label="Gravar áudio">
            <svg width="44" height="64" viewBox="0 0 44 64" {...line} strokeWidth="4">
              <rect x="12" y="2" width="20" height="42" rx="10" />
              <path d="M2 32c0 28 40 28 40 0M22 54v8" />
            </svg>
          </IconButton>
        </Tools>
      </Composer>
      <HomeArea><HomeIndicator /></HomeArea>
    </Screen>
  );
}
